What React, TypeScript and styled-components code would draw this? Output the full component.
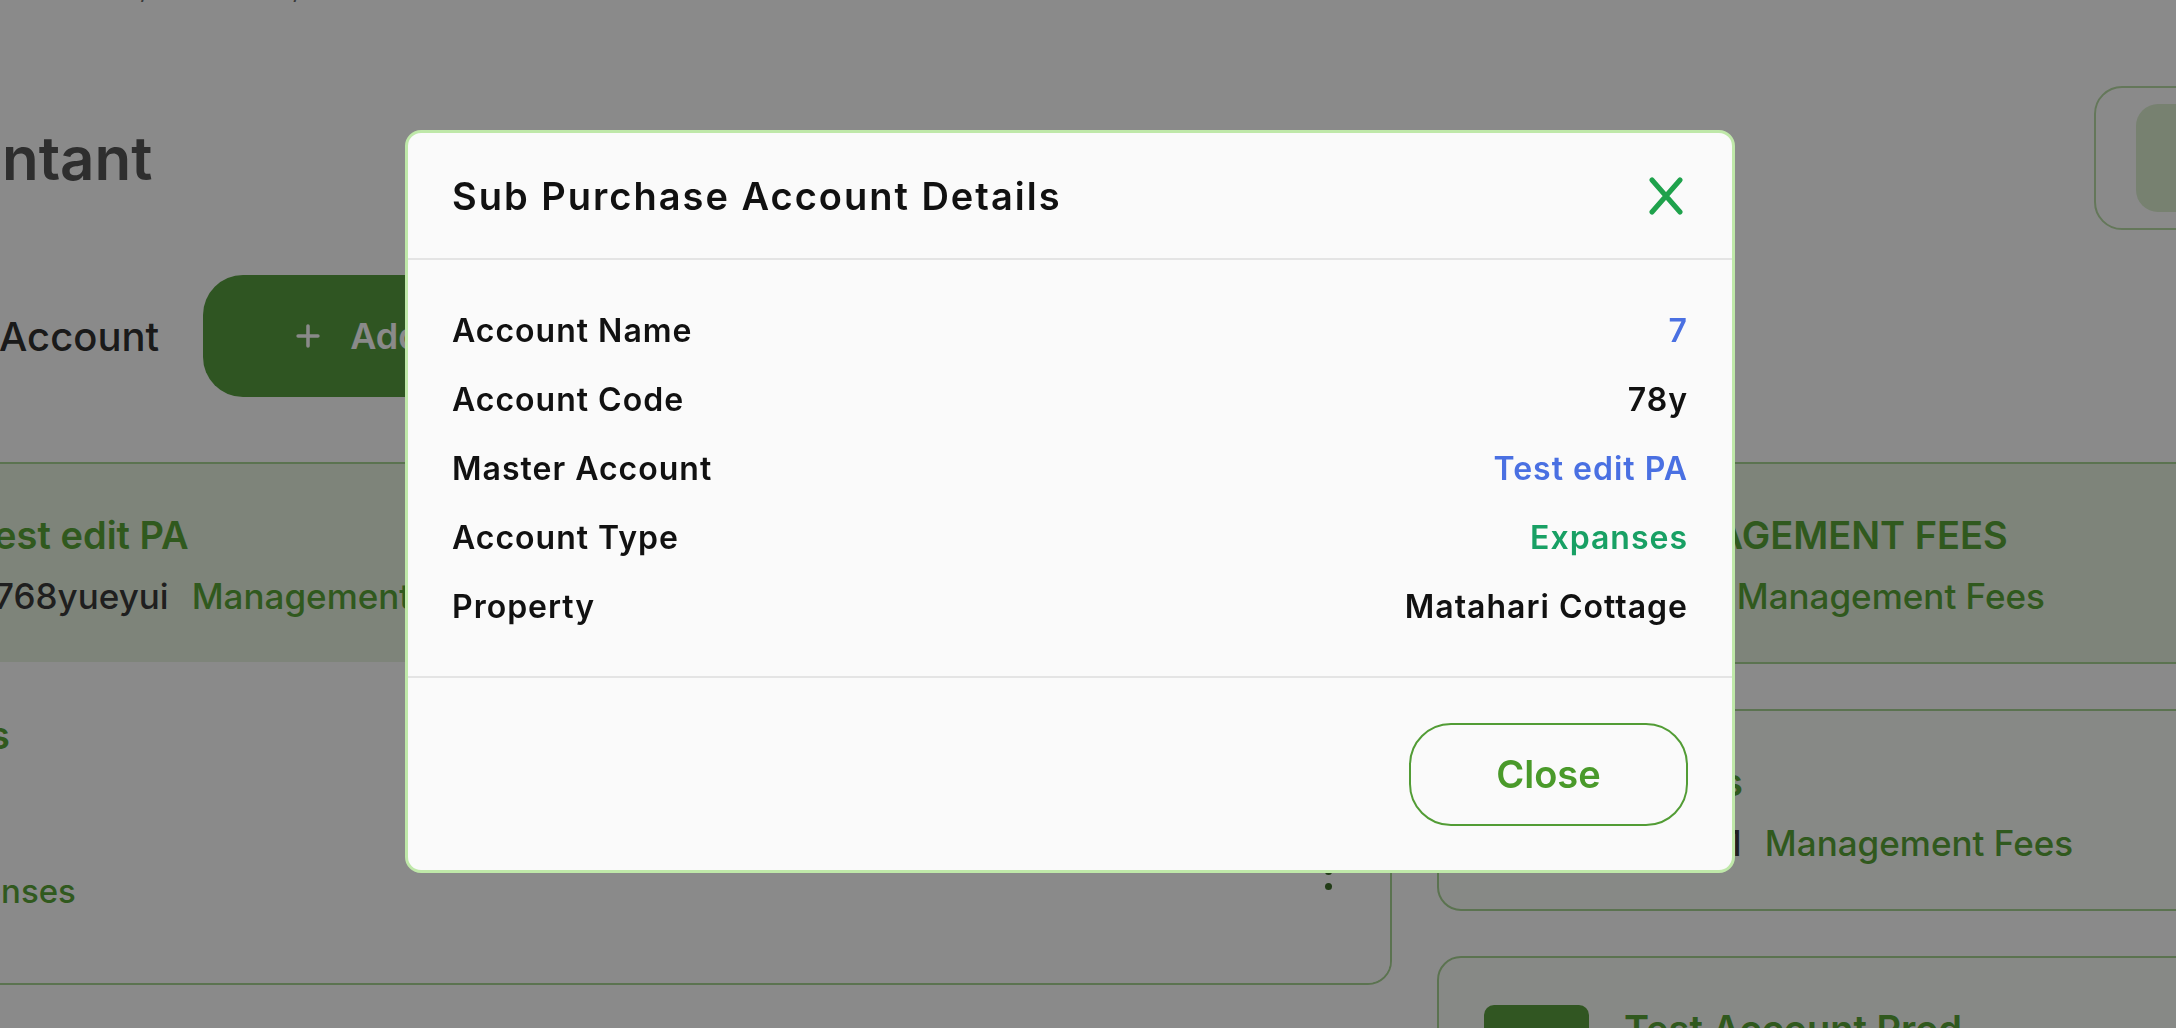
import React from 'react';
import styled, { createGlobalStyle } from 'styled-components';
import { Plus, Wallet } from 'lucide-react';

const GlobalStyle = createGlobalStyle`
  html, body {
    margin: 0;
    padding: 0;
  }
  body {
    background: #ffffff;
    font-family: Inter, "Noto Sans", sans-serif;
    overflow: hidden;
  }
  * {
    box-sizing: border-box;
  }
`;

const GREEN = '#5aa538';

const Page = styled.div`
  position: relative;
  width: 2176px;
  height: 1028px;
  overflow: hidden;
  background: #ffffff;
`;

// page is scrolled sideways in the shot, so the content starts left of the viewport
const Main = styled.main`
  width: 2760px;
  margin-left: -220px;
  padding-right: 46px;
  display: flex;
  flex-direction: column;
`;

const Breadcrumb = styled.div`
  margin: -24px 0 0 230px;
  font-size: 24px;
  line-height: 30px;
  color: #6b6b6b;
`;

const HeaderRow = styled.div`
  margin-top: 80px;
  padding-left: 36px;
  display: flex;
  align-items: center;
  justify-content: space-between;
`;

const PageTitle = styled.h1`
  margin: 0;
  font-size: 60px;
  line-height: 68px;
  font-weight: 600;
  color: #555555;
  white-space: nowrap;
`;

const Segment = styled.div`
  width: 400px;
  height: 144px;
  border: 2px solid #b9dda6;
  border-radius: 28px;
  padding: 16px 40px;
  display: flex;
  gap: 16px;
`;

const SegmentItem = styled.div<{ $active?: boolean }>`
  flex: 1;
  border-radius: 22px;
  background: ${({ $active }) => ($active ? '#dcefcf' : 'transparent')};
  display: flex;
  align-items: center;
  padding-left: 60px;
  font-size: 30px;
  font-weight: 600;
  color: #3f7d27;
`;

const ActionRow = styled.div`
  margin-top: 45px;
  padding-left: 29px;
  display: flex;
  align-items: center;
  gap: 44px;
`;

const SectionTitle = styled.h2`
  margin: 0;
  font-size: 40px;
  font-weight: 500;
  color: #303030;
  white-space: nowrap;
`;

const AddButton = styled.button`
  height: 122px;
  border: none;
  border-radius: 40px;
  background: #579d3f;
  color: #ffffff;
  display: flex;
  align-items: center;
  gap: 25px;
  padding: 0 70px 0 88px;
  font-family: inherit;
  font-size: 36px;
  font-weight: 600;
  white-space: nowrap;
`;

const Columns = styled.div`
  margin-top: 65px;
  display: grid;
  grid-template-columns: 1612px 1fr;
  gap: 45px;
  align-items: start;
`;

const CardStack = styled.div`
  display: flex;
  flex-direction: column;
  gap: 45px;
`;

const Card = styled.div<{ $tinted?: boolean }>`
  border: 2px solid #a9d594;
  border-radius: 24px;
  overflow: hidden;
  background: ${({ $tinted }) => ($tinted ? '#e9f4e1' : '#fafdf8')};
`;

const CardHead = styled.div<{ $tinted?: boolean; $inset?: number }>`
  display: flex;
  gap: 35px;
  padding: 47px 45px 44px ${({ $inset = 45 }) => $inset}px;
  background: ${({ $tinted }) => ($tinted ? '#e9f4e1' : 'transparent')};
`;

const IconTile = styled.div`
  width: 105px;
  height: 105px;
  flex-shrink: 0;
  border-radius: 10px;
  background: #5ca03f;
  display: flex;
  align-items: center;
  justify-content: center;
  color: #ffffff;
`;

const TextCol = styled.div`
  display: flex;
  flex-direction: column;
  gap: 15px;
`;

const CardTitle = styled.div`
  font-size: 38px;
  line-height: 48px;
  font-weight: 600;
  color: ${GREEN};
  white-space: nowrap;
`;

const MetaRow = styled.div`
  display: flex;
  gap: 23px;
  font-size: 35px;
  line-height: 44px;
  font-weight: 500;
  white-space: nowrap;
`;

const Code = styled.span`
  color: #3a3a3a;
`;

const TypeTag = styled.span`
  color: ${GREEN};
`;

const SubItem = styled.div`
  display: flex;
  align-items: flex-end;
  justify-content: space-between;
  padding: 49px 58px 68px 141px;
  background: #ffffff;
`;

const SubLines = styled.div`
  display: flex;
  flex-direction: column;
  gap: 30px;
  font-size: 33px;
  line-height: 48px;
  font-weight: 500;
  white-space: nowrap;
`;

const Kebab = styled.div`
  display: flex;
  flex-direction: column;
  gap: 8px;
  margin-bottom: 25px;
  span {
    width: 7px;
    height: 7px;
    border-radius: 50%;
    background: #3f6f2c;
  }
`;

/* ---------- modal ---------- */

const Overlay = styled.div`
  position: fixed;
  inset: 0;
  background: rgba(0, 0, 0, 0.46);
  display: flex;
  align-items: flex-start;
  padding: 130px 0 0 405px;
`;

const Dialog = styled.div`
  width: 1330px;
  background: #fafafa;
  border: 3px solid #bfe8a9;
  border-radius: 16px;
  overflow: hidden;
`;

const DialogHeader = styled.div`
  height: 127px;
  padding: 0 44px;
  display: flex;
  align-items: center;
  justify-content: space-between;
  border-bottom: 2px solid #e4e4e4;
`;

const DialogTitle = styled.h5`
  margin: 0;
  font-size: 38px;
  font-weight: 600;
  letter-spacing: 2px;
  color: #111111;
`;

const IconButton = styled.button`
  margin-right: 5px;
  padding: 0;
  border: none;
  background: transparent;
  display: flex;
  cursor: pointer;
`;

const DialogBody = styled.div`
  padding: 46px 44px 45px;
  display: flex;
  flex-direction: column;
  gap: 20px;
`;

const DetailRow = styled.div`
  display: flex;
  justify-content: space-between;
  font-size: 32px;
  line-height: 49px;
  font-weight: 600;
  letter-spacing: 1px;
`;

const Label = styled.span`
  color: #111111;
`;

const toneColor = {
  blue: '#4a70e2',
  green: '#18a064',
  dark: '#111111',
};

const Value = styled.span<{ $tone: keyof typeof toneColor }>`
  color: ${({ $tone }) => toneColor[$tone]};
`;

const DialogFooter = styled.div`
  height: 194px;
  padding: 0 44px;
  display: flex;
  align-items: center;
  justify-content: flex-end;
  border-top: 2px solid #e4e4e4;
`;

const CloseButton = styled.button`
  width: 279px;
  height: 103px;
  border: 2px solid #529c35;
  border-radius: 42px;
  background: transparent;
  color: #4a9a2a;
  font-family: inherit;
  font-size: 38px;
  font-weight: 600;
  cursor: pointer;
`;

const details: { label: string; value: string; tone: keyof typeof toneColor }[] = [
  { label: 'Account Name', value: '7', tone: 'blue' },
  { label: 'Account Code', value: '78y', tone: 'dark' },
  { label: 'Master Account', value: 'Test edit PA', tone: 'blue' },
  { label: 'Account Type', value: 'Expanses', tone: 'green' },
  { label: 'Property', value: 'Matahari Cottage', tone: 'dark' },
];

const others = [
  { title: 'MANAGEMENT FEES', code: 'MF01', type: 'Management Fees', tinted: true },
  { title: 'Levies', code: 'MG001', type: 'Management Fees', tinted: false },
  { title: 'Test Account Prod', code: 'TAP01', type: 'Expenses', tinted: false },
];

export default function App() {
  return (
    <Page>
      <GlobalStyle />
      <Main>
        <Breadcrumb>Dashboard / Accountant / Purchase Account</Breadcrumb>
        <HeaderRow>
          <PageTitle>Accountant</PageTitle>
          <Segment>
            <SegmentItem $active>Purchase</SegmentItem>
            <SegmentItem>Sales</SegmentItem>
          </Segment>
        </HeaderRow>
        <ActionRow>
          <SectionTitle>Purchase Account</SectionTitle>
          <AddButton>
            <Plus size={34} strokeWidth={2.5} />
            Add Purchase Account
          </AddButton>
        </ActionRow>
        <Columns>
          <Card>
            <CardHead $tinted $inset={50}>
              <IconTile>
                <Wallet size={52} />
              </IconTile>
              <TextCol>
                <CardTitle>Test edit PA</CardTitle>
                <MetaRow>
                  <Code>8768yueyui</Code>
                  <TypeTag>Management Fees</TypeTag>
                </MetaRow>
              </TextCol>
            </CardHead>
            <SubItem>
              <SubLines>
                <CardTitle>Fees</CardTitle>
                <Code>78y</Code>
                <TypeTag>Expenses</TypeTag>
              </SubLines>
              <Kebab>
                <span />
                <span />
                <span />
              </Kebab>
            </SubItem>
          </Card>
          <CardStack>
            {others.map((o) => (
              <Card key={o.title} $tinted={o.tinted}>
                <CardHead>
                  <IconTile>
                    <Wallet size={52} />
                  </IconTile>
                  <TextCol>
                    <CardTitle>{o.title}</CardTitle>
                    <MetaRow>
                      <Code>{o.code}</Code>
                      <TypeTag>{o.type}</TypeTag>
                    </MetaRow>
                  </TextCol>
                </CardHead>
              </Card>
            ))}
          </CardStack>
        </Columns>
      </Main>

      <Overlay>
        <Dialog>
          <DialogHeader>
            <DialogTitle>Sub Purchase Account Details</DialogTitle>
            <IconButton aria-label="Close">
              <svg width="34" height="38" viewBox="0 0 34 38">
                <path
                  d="M3 3 L31 35 M31 3 L3 35"
                  stroke="#1fa24c"
                  strokeWidth="5"
                  strokeLinecap="round"
                  fill="none"
                />
              </svg>
            </IconButton>
          </DialogHeader>
          <DialogBody>
            {details.map((d) => (
              <DetailRow key={d.label}>
                <Label>{d.label}</Label>
                <Value $tone={d.tone}>{d.value}</Value>
              </DetailRow>
            ))}
          </DialogBody>
          <DialogFooter>
            <CloseButton>Close</CloseButton>
          </DialogFooter>
        </Dialog>
      </Overlay>
    </Page>
  );
}
